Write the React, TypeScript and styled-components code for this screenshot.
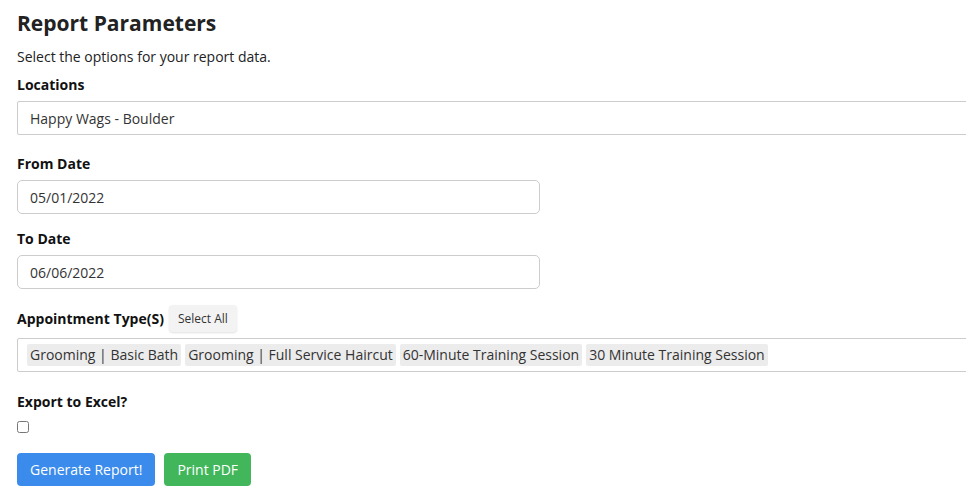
import React, { FC } from "react";
import styled, { createGlobalStyle } from "styled-components";

const GlobalStyle = createGlobalStyle`
  html, body {
    margin: 0;
    padding: 0;
    background: #fff;
    overflow: hidden;
  }
  body {
    font-family: "Open Sans", "Noto Sans", sans-serif;
    color: #222;
  }
`;

const Page = styled.div`
  box-sizing: border-box;
  padding: 8px 0 0 17px;
  width: 100%;
  overflow: hidden;
`;

const Title = styled.h1`
  margin: 0;
  font-size: 21px;
  line-height: 30px;
  font-weight: 700;
  color: #222;
`;

const Subtitle = styled.p`
  margin: 9px 0 0;
  font-size: 14px;
  line-height: 20px;
`;

const Field = styled.div<{ $gap?: number }>`
  margin-top: ${(p) => p.$gap ?? 0}px;
`;

const LabelRow = styled.div`
  display: flex;
  align-items: center;
  gap: 5px;
  margin-bottom: 6px;
`;

const Label = styled.label`
  font-size: 14px;
  line-height: 20px;
  font-weight: 700;
  color: #111;
`;

const Box = styled.div<{ $width?: number }>`
  box-sizing: border-box;
  width: ${(p) => (p.$width ? `${p.$width}px` : "calc(100% + 20px)")};
  height: 34px;
  border: 1px solid #ccc;
  border-radius: ${(p) => (p.$width ? "5px" : "2px 0 0 2px")};
  padding: 0 12px;
  display: flex;
  align-items: center;
  gap: 4px;
  font-size: 14px;
  color: #333;
`;

const TagBox = styled(Box)`
  padding: 0 9px;
`;

const Tag = styled.span`
  background: #ececec;
  border-radius: 2px;
  padding: 1px 3px;
  line-height: 20px;
  font-size: 14px;
  color: #333;
`;

const SmallButton = styled.button`
  font-family: inherit;
  font-size: 12px;
  color: #333;
  background: #f3f3f3;
  border: none;
  border-radius: 4px;
  height: 27px;
  padding: 0 9px;
  box-shadow: 0 1px 2px rgba(0, 0, 0, 0.12);
`;

const Checkbox = styled.input`
  margin: 9px 0 0;
  width: 12px;
  height: 12px;
`;

const Actions = styled.div`
  display: flex;
  gap: 9px;
  margin-top: 15px;
`;

const Button = styled.button<{ $color: string }>`
  font-family: inherit;
  font-size: 14px;
  color: #fff;
  background: ${(p) => p.$color};
  border: none;
  border-radius: 4px;
  height: 33px;
  padding: 0 13px;
`;

const tags = [
  "Grooming | Basic Bath",
  "Grooming | Full Service Haircut",
  "60-Minute Training Session",
  "30 Minute Training Session",
];

const App: FC = () => {
  return (
    <>
      <GlobalStyle />
      <Page>
        <Title>Report Parameters</Title>
        <Subtitle>Select the options for your report data.</Subtitle>

        <Field $gap={8}>
          <LabelRow>
            <Label>Locations</Label>
          </LabelRow>
          <Box>Happy Wags - Boulder</Box>
        </Field>

        <Field $gap={19}>
          <LabelRow>
            <Label>From Date</Label>
          </LabelRow>
          <Box $width={523}>05/01/2022</Box>
        </Field>

        <Field $gap={15}>
          <LabelRow>
            <Label>To Date</Label>
          </LabelRow>
          <Box $width={523}>06/06/2022</Box>
        </Field>

        <Field $gap={16}>
          <LabelRow>
            <Label>Appointment Type(S)</Label>
            <SmallButton>Select All</SmallButton>
          </LabelRow>
          <TagBox>
            {tags.map((t) => (
              <Tag key={t}>{t}</Tag>
            ))}
          </TagBox>
        </Field>

        <Field $gap={18}>
          <Label>Export to Excel?</Label>
          <div>
            <Checkbox type="checkbox" />
          </div>
        </Field>

        <Actions>
          <Button $color="#3a8bec">Generate Report!</Button>
          <Button $color="#41b65b">Print PDF</Button>
        </Actions>
      </Page>
    </>
  );
};

export default App;
